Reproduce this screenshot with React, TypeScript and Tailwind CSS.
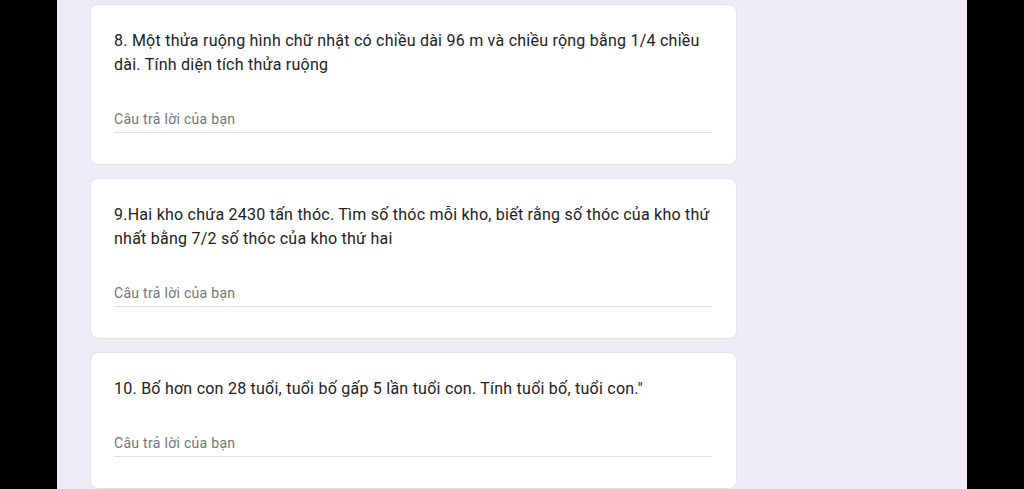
import React from "react";

interface Question {
  id: number;
  text: string;
}

const questions: Question[] = [
  {
    id: 8,
    text: "8. Một thửa ruộng hình chữ nhật có chiều dài 96 m và chiều rộng bằng 1/4 chiều dài. Tính diện tích thửa ruộng",
  },
  {
    id: 9,
    text: "9.Hai kho chứa 2430 tấn thóc. Tìm số thóc mỗi kho, biết rằng số thóc của kho thứ nhất bằng 7/2 số thóc của kho thứ hai",
  },
  {
    id: 10,
    text: '10. Bố hơn con 28 tuổi, tuổi bố gấp 5 lần tuổi con. Tính tuổi bố, tuổi con."',
  },
];

const QuestionCard: React.FC<{ q: Question }> = ({ q }) => (
  <div className="w-[647px] bg-white border border-[#e2e2e6] rounded-lg pt-6 pb-[31px] pl-[23px] pr-6">
    <p className="text-[16px] leading-6 text-[#202124] tracking-[0.24px] [font-family:Roboto,'Noto_Sans',sans-serif]">
      {q.text}
    </p>
    <div className="mt-8 pb-[3px] border-b border-[#e0e0e0]">
      <span className="block text-[14px] leading-5 text-[#70757a] tracking-[0.3px] [font-family:Roboto,'Noto_Sans',sans-serif]">
        Câu trả lời của bạn
      </span>
    </div>
  </div>
);

export default function App() {
  return (
    <div className="flex h-[489px] w-[1024px] overflow-hidden bg-black">
      <div className="w-[57px] shrink-0 bg-black" />
      <main className="flex-1 bg-[#eeeaf8] pt-1 pl-[33px] flex flex-col gap-[13px]">
        {questions.map((q) => (
          <QuestionCard key={q.id} q={q} />
        ))}
      </main>
      <div className="w-[57px] shrink-0 bg-black" />
    </div>
  );
}
